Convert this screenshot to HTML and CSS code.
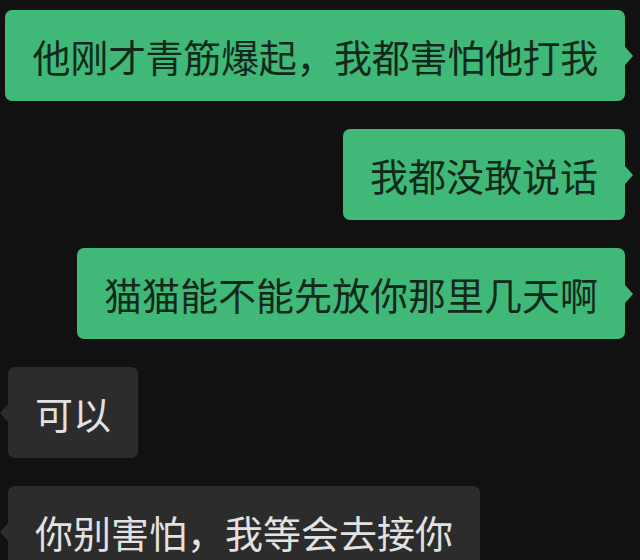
FILE: index.html
```html
<!DOCTYPE html>
<html lang="zh-CN">
<head>
  <meta charset="UTF-8">
  <title>聊天记录</title>
  <link rel="stylesheet" href="styles.css">
</head>
<body>

  <div class="chat">
    <div class="row me">
      <div class="bubble tight">他刚才青筋爆起，我都害怕他打我</div>
    </div>
    <div class="row me">
      <div class="bubble">我都没敢说话</div>
    </div>
    <div class="row me">
      <div class="bubble">猫猫能不能先放你那里几天啊</div>
    </div>
    <div class="row other">
      <div class="bubble">可以</div>
    </div>
    <div class="row other">
      <div class="bubble">你别害怕，我等会去接你</div>
    </div>
  </div>

</body>
</html>
```

FILE: styles.css
```css
body {
  margin: 0;
  padding: 0;
  background-color: #111111;
  font-family: "Noto Sans CJK SC", "Noto Sans", sans-serif;
  height: 560px;
  overflow: hidden;
}

.chat {
  display: flex;
  flex-direction: column;
  gap: 28px;
  padding-top: 10px;
}

.row {
  display: flex;
}

.row.me {
  justify-content: flex-end;
  padding-right: 15px;
}

.row.other {
  justify-content: flex-start;
  padding-left: 8px;
}

.bubble {
  position: relative;
  height: 91px;
  line-height: 91px;
  padding: 0 27px;
  font-size: 38px;
  border-radius: 7px;
  white-space: nowrap;
}

.bubble.tight {
  letter-spacing: -0.3px;
}

.me .bubble {
  background-color: #40b878;
  color: #11291a;
}

.other .bubble {
  background-color: #2c2c2c;
  color: #e2e2e2;
}

.bubble::after {
  content: "";
  position: absolute;
  top: 37px;
  width: 0;
  height: 0;
  border-top: 9px solid transparent;
  border-bottom: 9px solid transparent;
}

.me .bubble::after {
  right: -8px;
  border-left: 8px solid #40b878;
}

.other .bubble::after {
  left: -8px;
  border-right: 8px solid #2c2c2c;
}
```
